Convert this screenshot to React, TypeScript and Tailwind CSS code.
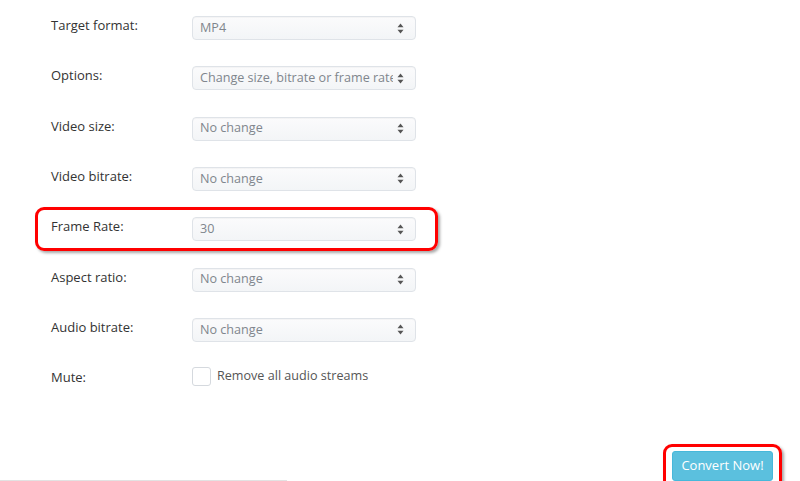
import React from 'react'

const rows = [
  { label: 'Target format:', value: 'MP4' },
  { label: 'Options:', value: 'Change size, bitrate or frame rate' },
  { label: 'Video size:', value: 'No change' },
  { label: 'Video bitrate:', value: 'No change' },
  { label: 'Frame Rate:', value: '30', highlight: true },
  { label: 'Aspect ratio:', value: 'No change' },
  { label: 'Audio bitrate:', value: 'No change' },
]

const Arrows = () => (
  <svg width="7" height="11" viewBox="0 0 7 11" className="shrink-0">
    <path d="M3.5 0.5 L6.5 4.2 H0.5 Z" fill="#555" />
    <path d="M3.5 10.5 L6.5 6.8 H0.5 Z" fill="#555" />
  </svg>
)

const FakeSelect = ({ value }: { value: string }) => (
  <div className="flex h-6 w-[224px] items-center gap-1 rounded-[4px] border border-[#dfe3e8] bg-gradient-to-b from-[#fbfbfc] to-[#f3f5f7] pl-[7px] pr-[11px] text-[12.6px] text-[#80868d] shadow-[inset_0_1px_1px_rgba(0,0,0,0.03)]">
    <span className="flex-1 overflow-hidden whitespace-nowrap">{value}</span>
    <Arrows />
  </div>
)

export default function App() {
  return (
    <div className="relative h-[481px] w-[800px] overflow-hidden bg-white font-['Open_Sans',sans-serif] text-[13px] text-[#333]">
      <div className="flex flex-col pl-[51px] pt-4">
        {rows.map((row) => (
          <div key={row.label} className="relative flex h-[50.33px] items-start">
            {row.highlight && (
              <div className="pointer-events-none absolute -left-4 -top-[10px] h-[44px] w-[403px] rounded-[9px] border-[3px] border-[#f00] shadow-[2px_2px_3px_rgba(0,0,0,0.35)]" />
            )}
            <div className="w-[141px] leading-[18px]">{row.label}</div>
            <FakeSelect value={row.value} />
          </div>
        ))}
        <div className="-mt-[1px] flex items-center">
          <div className="w-[141px] leading-[18px]">Mute:</div>
          <div className="flex items-center gap-[6px]">
            <div className="h-[19px] w-[19px] rounded-[3px] border border-[#d5d9de] bg-white" />
            <span className="text-[12.6px] text-[#555]">Remove all audio streams</span>
          </div>
        </div>
      </div>

      <div className="absolute bottom-0 left-0 h-px w-[287px] bg-[#e2e2e2]" />

      <div className="absolute right-[18px] top-[444px] rounded-[9px] border-[3px] border-[#f00] px-[6px] pb-[6px] pt-[4px] shadow-[2px_2px_3px_rgba(0,0,0,0.35)]">
        <button className="h-[30px] w-[101px] rounded-[3px] border border-[#46b8da] bg-[#5bc0de] text-[13px] text-white">
          Convert Now!
        </button>
      </div>
    </div>
  )
}
